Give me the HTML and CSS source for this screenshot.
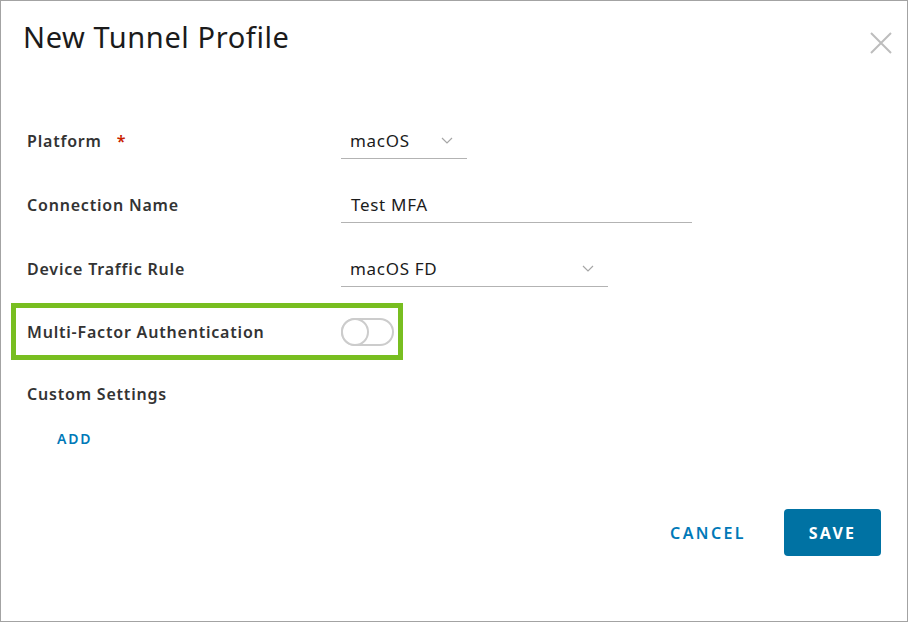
FILE: index.html
```html
<!DOCTYPE html>
<html lang="en">
<head>
    <meta charset="UTF-8">
    <meta name="viewport" content="width=device-width, initial-scale=1.0">
    <title>New Tunnel Profile</title>
    <link rel="stylesheet" href="styles.css">
</head>
<body>
    <div class="dialog">
        <div class="header">
            <h1 class="title">New Tunnel Profile</h1>
            <button class="close" type="button" aria-label="Close">
                <svg width="24" height="24" viewBox="0 0 24 24">
                    <path d="M2 2 L22 22 M22 2 L2 22" stroke="#bdbdbd" stroke-width="2" fill="none"/>
                </svg>
            </button>
        </div>

        <div class="form">
            <div class="row">
                <div class="label">Platform <span class="required">*</span></div>
                <div class="field select small">
                    <span>macOS</span>
                    <svg class="chevron" width="12" height="7" viewBox="0 0 12 7"><path d="M1 1 L6 6 L11 1" stroke="#a6a6a6" stroke-width="1.2" fill="none"/></svg>
                </div>
            </div>
            <div class="row">
                <div class="label">Connection Name</div>
                <div class="field wide"><span class="value">Test MFA</span></div>
            </div>
            <div class="row">
                <div class="label">Device Traffic Rule</div>
                <div class="field select medium">
                    <span>macOS FD</span>
                    <svg class="chevron" width="12" height="7" viewBox="0 0 12 7"><path d="M1 1 L6 6 L11 1" stroke="#a6a6a6" stroke-width="1.2" fill="none"/></svg>
                </div>
            </div>
            <div class="row highlight">
                <div class="label">Multi-Factor Authentication</div>
                <div class="toggle"><span class="knob"></span></div>
            </div>
            <div class="section-title">Custom Settings</div>
            <a class="add" href="#">ADD</a>
        </div>

        <div class="footer">
            <button class="btn-link" type="button">CANCEL</button>
            <button class="btn-primary" type="button">SAVE</button>
        </div>
    </div>
</body>
</html>
```

FILE: styles.css
```css
* {
    box-sizing: border-box;
}

body {
    margin: 0;
    background-color: #ffffff;
    font-family: "Noto Sans", "Open Sans", sans-serif;
}

.dialog {
    width: 908px;
    height: 622px;
    border: 1px solid #a3a3a3;
    display: flex;
    flex-direction: column;
}

.header {
    display: flex;
    justify-content: space-between;
    padding: 18px 14px 0 22px;
}

.title {
    margin: 0;
    font-size: 29px;
    font-weight: 400;
    letter-spacing: 0.6px;
    color: #1b1b1b;
    line-height: 36px;
}

.close {
    background: none;
    border: none;
    padding: 0;
    margin-top: 12px;
    width: 24px;
    height: 24px;
    cursor: pointer;
}

.form {
    padding: 53px 0 0 26px;
}

.row {
    display: flex;
    align-items: center;
    height: 64px;
    padding-top: 1px;
}

.label {
    width: 314px;
    flex-shrink: 0;
    font-size: 16px;
    font-weight: 600;
    letter-spacing: 0.8px;
    color: #333333;
}

.required {
    color: #c92100;
    margin-left: 10px;
}

.field {
    height: 36px;
    display: flex;
    align-items: center;
    justify-content: space-between;
    border-bottom: 1px solid #b3b3b3;
    padding: 0 14px 0 9px;
    font-size: 17px;
    letter-spacing: 0.7px;
    color: #1b1b1b;
}

.field.small { width: 126px; }
.field.medium { width: 267px; }
.field.wide { width: 351px; }
.field .value { padding-left: 1px; }

.highlight {
    height: 57px;
    width: 392px;
    margin: 3px 0 4px -16px;
    padding: 0 0 0 11px;
    border: 5px solid #78be20;
}

.toggle {
    width: 53px;
    height: 28px;
    border: 2px solid #cccccc;
    border-radius: 14px;
    position: relative;
}

.knob {
    position: absolute;
    left: -2px;
    top: -2px;
    width: 28px;
    height: 28px;
    border: 2px solid #cccccc;
    border-radius: 50%;
    background: #ffffff;
}

.section-title {
    height: 60px;
    line-height: 60px;
    font-size: 16px;
    font-weight: 600;
    letter-spacing: 0.8px;
    color: #333333;
}

.add {
    display: inline-block;
    margin-left: 30px;
    margin-top: 5px;
    font-size: 14px;
    font-weight: 600;
    letter-spacing: 1.8px;
    color: #0079b8;
    text-decoration: none;
}

.footer {
    margin-top: auto;
    display: flex;
    justify-content: flex-end;
    align-items: center;
    padding: 0 26px 65px 0;
}

.btn-link {
    background: none;
    border: none;
    font-family: inherit;
    font-size: 16px;
    font-weight: 600;
    letter-spacing: 2.4px;
    color: #0079b8;
    margin-right: 32px;
    cursor: pointer;
}

.btn-primary {
    width: 97px;
    height: 47px;
    background-color: #0072a3;
    border: none;
    border-radius: 4px;
    font-family: inherit;
    font-size: 16px;
    font-weight: 700;
    letter-spacing: 2.2px;
    color: #ffffff;
    cursor: pointer;
}
```
